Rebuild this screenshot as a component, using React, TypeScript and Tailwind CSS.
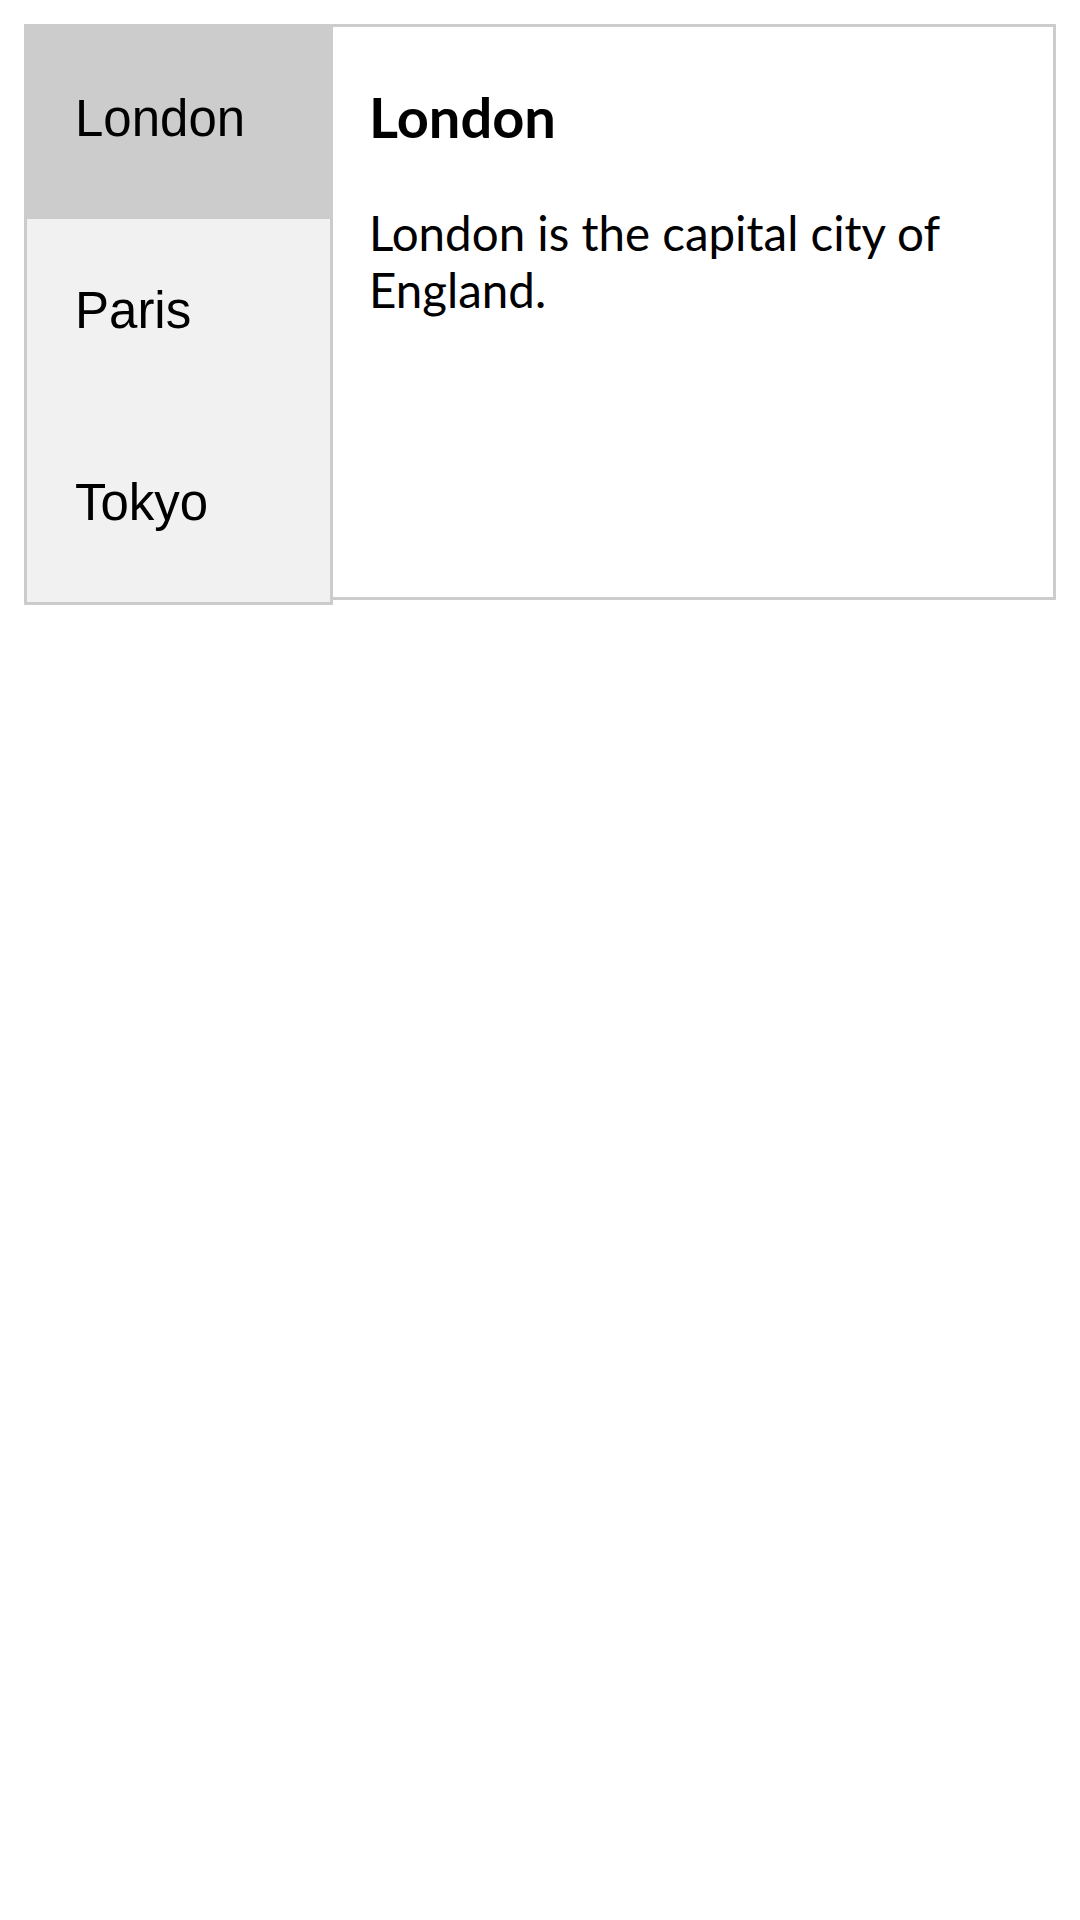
import React, { useState } from 'react';

interface City {
  name: string;
  text: string;
}

const cities: City[] = [
  { name: 'London', text: 'London is the capital city of England.' },
  { name: 'Paris', text: 'Paris is the capital of France.' },
  { name: 'Tokyo', text: 'Tokyo is the capital of Japan.' },
];

const App: React.FC = () => {
  const [active, setActive] = useState<string>('London');
  const city = cities.find((c) => c.name === active) ?? cities[0];

  return (
    <div className="min-h-screen bg-white p-[24px] flex items-start text-black">
      <div className="w-[309px] shrink-0 border-[3px] border-[#cccccc] bg-[#f1f1f1] flex flex-col">
        {cities.map((c, i) => (
          <button
            key={c.name}
            onClick={() => setActive(c.name)}
            className={`flex items-center w-full text-left pl-[48px] pb-[7px] ${i === 2 ? 'h-[191px]' : 'h-[192px]'} ${
              active === c.name ? 'bg-[#cccccc]' : 'bg-[#f1f1f1] hover:bg-[#dddddd]'
            } text-[51px] leading-normal font-['Liberation_Sans',Arial,sans-serif] cursor-pointer`}
          >
            {c.name}
          </button>
        ))}
      </div>
      <div className="flex-1 h-[576px] border-[3px] border-l-0 border-[#cccccc] bg-white px-[36px] font-['Lato',sans-serif]">
        <h3 className="mt-[56px] mb-[54px] text-[56px] font-bold leading-[1.2]">{city.name}</h3>
        <p className="text-[47.5px] leading-[1.2]">{city.text}</p>
      </div>
    </div>
  );
};

export default App;
